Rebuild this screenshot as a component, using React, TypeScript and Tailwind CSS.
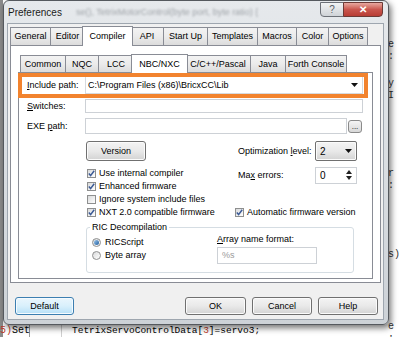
import React from "react";

const winBtn =
  "flex items-center justify-center rounded-[3px] border border-[#707070] bg-gradient-to-b from-[#f4f4f4] via-[#e9e9e9] to-[#d3d3d3] shadow-[inset_0_0_0_1px_#fbfbfb]";

function Arrow() {
  return (
    <svg width="7" height="4" viewBox="0 0 7 4">
      <path d="M0 0 H7 L3.5 4 Z" fill="#111" />
    </svg>
  );
}

function Check({ checked }: { checked: boolean }) {
  return (
    <span className="flex h-[9px] w-[9px] shrink-0 items-center justify-center border border-[#8e8f8f] bg-gradient-to-br from-[#d9dadb] to-white">
      {checked && (
        <svg width="7" height="7" viewBox="0 0 7 7">
          <path d="M0.8 3.6 L2.6 5.6 L6.2 0.8" stroke="#3b5a96" strokeWidth="1.5" fill="none" />
        </svg>
      )}
    </span>
  );
}

function Radio({ on }: { on: boolean }) {
  return (
    <span className="flex h-[9px] w-[9px] shrink-0 items-center justify-center rounded-full border border-[#8e8f8f] bg-gradient-to-br from-[#d9dadb] to-white">
      {on && <span className="h-[5px] w-[5px] rounded-full bg-gradient-to-br from-[#9cc8ee] to-[#1f5e9e]" />}
    </span>
  );
}

function Tab({ label, w, ml, active }: { label: string; w: string; ml: string; active?: boolean }) {
  return active ? (
    <div className={`${w} ${ml} relative z-10 -mb-px flex h-full items-center justify-center border border-b-0 border-[#898c95] bg-white`}>
      {label}
    </div>
  ) : (
    <div className={`${w} ${ml} flex h-[calc(100%-2px)] items-center justify-center border border-b-0 border-[#898c95] bg-gradient-to-b from-[#f3f3f3] via-[#ebebeb] to-[#dcdcdc]`}>
      {label}
    </div>
  );
}

export default function App() {
  return (
    <div className="relative h-[337px] w-[400px] overflow-hidden bg-white font-['Liberation_Sans',Arial,sans-serif] text-[9px] leading-[11px] text-black">
      {/* editor behind the dialog */}
      <div className="absolute left-0 top-0 h-full w-[3px] bg-[#8c8c8c]" />
      <div className="absolute left-[29px] top-[296px] h-[41px] w-px bg-[#9a9a9a]" />
      <div className="absolute left-[61px] top-[296px] h-[41px] w-px bg-[#cfcfcf]" />
      <div className="absolute left-0 top-[325px] font-['Liberation_Mono',monospace] text-[10px] leading-[12px]">
        <span className="text-[#c0392b]">5)</span>Set
      </div>
      <div className="absolute left-[72px] top-[313px] font-['Liberation_Mono',monospace] text-[9.5px] leading-[12px]">
        TetrixServoControlData[<span className="text-[#c0392b]">2</span>]=servo2;
      </div>
      <div className="absolute left-[72px] top-[325px] font-['Liberation_Mono',monospace] text-[9.5px] leading-[12px]">
        TetrixServoControlData[<span className="text-[#c0392b]">3</span>]=servo3;
      </div>
      <div className="absolute left-[388px] top-0 flex h-full flex-col font-['Liberation_Mono',monospace] text-[10px] leading-[12px] text-[#333]">
        <span className="mt-[39px]">e :</span>
        <span className="mt-[15px]">y I</span>
        <span className="mt-[66px]">r :</span>
        <span className="mt-[57px]">s)</span>
        <span className="mt-[60px]">e :</span>
      </div>

      {/* dialog window */}
      <div className="absolute left-[3px] top-0 z-10 flex h-[325px] w-[386px] flex-col rounded-[6px] border border-[#55595e] bg-gradient-to-b from-[#e6e9ec] via-[#dadee2] to-[#cdd2d7] shadow-[2px_3px_6px_rgba(0,0,0,0.55)]">
        <div className="flex h-[22px] shrink-0 items-center pl-[4px] pr-[5px]">
          <span className="text-[10px] text-[#1b1b1b]">Preferences</span>
          <span className="ml-[14px] truncate text-[9px] text-[#7f848a] opacity-70 blur-[1.3px]">
            se(), TetrixMotorControl(byte port, byte ratio) {"{"}
          </span>
          <div className="mb-auto ml-auto mt-[1px] flex h-[15px]">
            <div className="flex w-[24px] items-center justify-center rounded-bl-[4px] border border-[#6c7077] bg-gradient-to-b from-[#f2f3f4] to-[#cfd3d7] text-[10px] text-[#5a5f66]">
              ?
            </div>
            <div className="-ml-px flex w-[40px] items-center justify-center rounded-br-[4px] border border-[#6c3a36] bg-gradient-to-b from-[#e6a8a0] via-[#c9564e] to-[#b83c34] text-[10px] font-bold text-white">
              ✕
            </div>
          </div>
        </div>

        <div className="ml-[3px] flex h-[297px] w-[377px] flex-col border border-[#9ea6af] bg-[#f0f0f0]">
          {/* top tabs */}
          <div className="ml-[2px] mt-px flex h-[20px] items-end">
            <Tab label="General" w="w-[41px]" ml="" />
            <Tab label="Editor" w="w-[35px]" ml="-ml-px" />
            <Tab label="Compiler" w="w-[51px]" ml="-ml-[3px]" active />
            <Tab label="API" w="w-[34px]" ml="-ml-[3px]" />
            <Tab label="Start Up" w="w-[45px]" ml="-ml-px" />
            <Tab label="Templates" w="w-[51px]" ml="-ml-px" />
            <Tab label="Macros" w="w-[40px]" ml="-ml-px" />
            <Tab label="Color" w="w-[33px]" ml="-ml-px" />
            <Tab label="Options" w="w-[40px]" ml="-ml-px" />
          </div>

          {/* outer pane */}
          <div className="ml-[2px] h-[238px] w-[371px] border border-[#898c95] bg-white">
            <div className="ml-[9px] mt-[7px] flex h-[19px] items-end">
              <Tab label="Common" w="w-[46px]" ml="" />
              <Tab label="NQC" w="w-[34px]" ml="-ml-px" />
              <Tab label="LCC" w="w-[36px]" ml="-ml-px" />
              <Tab label="NBC/NXC" w="w-[57px]" ml="-ml-[3px]" active />
              <Tab label="C/C++/Pascal" w="w-[66px]" ml="-ml-[3px]" />
              <Tab label="Java" w="w-[36px]" ml="-ml-px" />
              <Tab label="Forth Console" w="w-[62px]" ml="-ml-px" />
            </div>

            {/* inner pane */}
            <div className="ml-[7px] h-[207px] w-[355px] border border-[#898c95] bg-white">
              <div className="mt-[3px] flex h-[18px] items-center pl-[8px]">
                <span className="w-[58px]">
                  <u>I</u>nclude path:
                </span>
                <div className="flex h-[18px] w-[278px] items-center justify-between border border-[#d6dadf] pl-[2px] pr-[4px]">
                  <span>C:\Program Files (x86)\BricxCC\Lib</span>
                  <Arrow />
                </div>
              </div>

              <div className="mt-[5px] flex h-[14px] items-center pl-[8px]">
                <span className="w-[58px]">
                  <u>S</u>witches:
                </span>
                <div className="h-[14px] w-[278px] border border-[#cdd1d6]" />
              </div>

              <div className="mt-[5px] flex h-[16px] items-center pl-[8px]">
                <span className="w-[58px]">
                  EXE <u>p</u>ath:
                </span>
                <div className="h-[16px] w-[262px] border border-[#cdd1d6]" />
                <div className="ml-px flex h-[13px] w-[14px] items-end justify-center rounded-[3px] border border-[#8a8a8a] bg-gradient-to-b from-[#f4f4f4] to-[#d8d8d8] pb-[2px] text-[8px] leading-[6px]">
                  ...
                </div>
              </div>

              <div className="mt-[7px] flex">
                <div className="ml-[67px] w-[149px]">
                  <div className={`${winBtn} h-[20px] w-[60px]`}>Version</div>
                  <div className="mt-[6px] flex flex-col">
                    {[
                      ["Use internal compiler", true],
                      ["Enhanced firmware", true],
                      ["Ignore system include files", false],
                      ["NXT 2.0 compatible firmware", true],
                    ].map(([label, on]) => (
                      <div key={label as string} className="flex h-[13px] items-center gap-[3px] pl-px">
                        <Check checked={on as boolean} />
                        <span className="whitespace-nowrap">{label}</span>
                      </div>
                    ))}
                  </div>
                </div>
                <div className="w-[125px]">
                  <div className="flex h-[20px] items-center pl-[3px]">
                    <span className="w-[77px]">
                      Optimization <u>l</u>evel:
                    </span>
                    <div className="flex h-[20px] w-[42px] items-center justify-between rounded-[2px] border border-[#707070] bg-gradient-to-b from-[#f4f4f4] via-[#e9e9e9] to-[#d3d3d3] px-[4px] text-[10px] shadow-[inset_0_0_0_1px_#fbfbfb]">
                      <span>2</span>
                      <Arrow />
                    </div>
                  </div>
                  <div className="mt-[5px] flex h-[18px] items-center pl-[3px]">
                    <span className="w-[77px]">
                      Ma<u>x</u> errors:
                    </span>
                    <div className="flex h-[17px] w-[42px] items-center justify-between border border-[#cdd1d6] px-[4px] text-[10px]">
                      <span>0</span>
                      <span className="flex flex-col gap-[2px]">
                        <svg width="6" height="4" viewBox="0 0 6 4">
                          <path d="M0 4 H6 L3 0 Z" fill="#222" />
                        </svg>
                        <svg width="6" height="4" viewBox="0 0 6 4">
                          <path d="M0 0 H6 L3 4 Z" fill="#222" />
                        </svg>
                      </span>
                    </div>
                  </div>
                  <div className="mt-[22px] flex h-[13px] items-center gap-[3px]">
                    <Check checked />
                    <span className="whitespace-nowrap">Automatic firmware version</span>
                  </div>
                </div>
              </div>

              <fieldset className="ml-[67px] mt-[3px] h-[51px] w-[268px] rounded-[3px] border border-[#d5dde3]">
                <legend className="ml-[3px] px-[2px] leading-[11px]">RIC Decompilation</legend>
                <div className="flex">
                  <div className="mt-[3px] w-[130px] pl-[5px]">
                    <div className="flex h-[13px] items-center gap-[4px]">
                      <Radio on />
                      <span>RICScript</span>
                    </div>
                    <div className="flex h-[13px] items-center gap-[4px]">
                      <Radio on={false} />
                      <span>Byte array</span>
                    </div>
                  </div>
                  <div className="mt-[1px]">
                    <div>
                      <u>A</u>rray name format:
                    </div>
                    <div className="mt-[2px] flex h-[17px] w-[100px] items-center border border-[#cdd1d6] pl-[4px] text-[#9a9a9a]">%s</div>
                  </div>
                </div>
              </fieldset>
            </div>
          </div>

          {/* bottom buttons */}
          <div className="mt-[14px] flex h-[18px] pr-[5px]">
            <div className="ml-[7px] flex h-[18px] w-[59px] items-center justify-center rounded-[3px] border border-[#3c7fb1] bg-gradient-to-b from-[#eaf6fd] via-[#d9f0fc] to-[#b6e0f7] shadow-[inset_0_0_0_1px_#f5fbff]">
              Default
            </div>
            <div className={`${winBtn} ml-auto h-[18px] w-[61px]`}>OK</div>
            <div className={`${winBtn} ml-[6px] h-[18px] w-[60px]`}>Cancel</div>
            <div className={`${winBtn} ml-[6px] h-[18px] w-[60px]`}>Help</div>
          </div>
        </div>
      </div>

      {/* highlight annotation */}
      <div className="absolute left-[18px] top-[73px] z-20 h-[25px] w-[350px] border-[4px] border-[#f2832e]" />
    </div>
  );
}
